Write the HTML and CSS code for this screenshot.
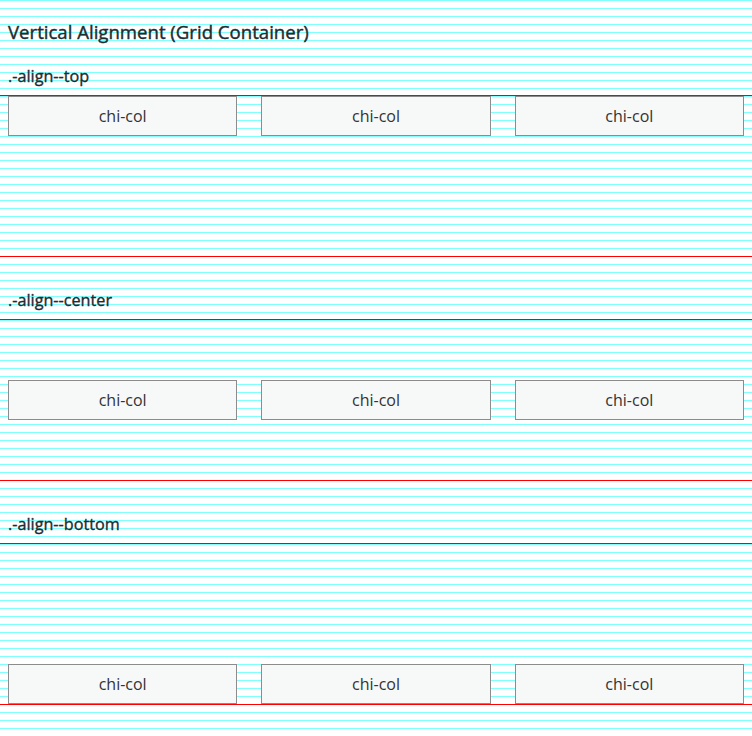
FILE: index.html
```html
<!DOCTYPE html>
<html>
<head>
<meta charset="utf-8">
<link rel="stylesheet" href="styles.css">
</head>
<body>
<h1 class="title">Vertical Alignment (Grid Container)</h1>

<section class="demo">
  <h2 class="demo-label">.-align--top</h2>
  <div class="grid grid--top">
    <div class="col">chi-col</div>
    <div class="col">chi-col</div>
    <div class="col">chi-col</div>
  </div>
</section>

<section class="demo">
  <h2 class="demo-label">.-align--center</h2>
  <div class="grid grid--center">
    <div class="col">chi-col</div>
    <div class="col">chi-col</div>
    <div class="col">chi-col</div>
  </div>
</section>

<section class="demo">
  <h2 class="demo-label">.-align--bottom</h2>
  <div class="grid grid--bottom">
    <div class="col">chi-col</div>
    <div class="col">chi-col</div>
    <div class="col">chi-col</div>
  </div>
</section>
</body>
</html>
```

FILE: styles.css
```css
html {
  background-color: #ffffff;
  background-image: linear-gradient(#80ffff 1px, transparent 1px);
  background-size: 100% 8px;
  background-position: 0 0;
}

body {
  margin: 0;
  font-family: "Open Sans", "Liberation Sans", sans-serif;
  color: #222a2e;
}

.title {
  margin: 0;
  padding: 20px 8px 0;
  font-size: 18.6px;
  line-height: 24px;
  font-weight: 400;
  -webkit-text-stroke: 0.4px #222a2e;
}

.demo {
  margin-top: 20px;
}

.demo + .demo {
  margin-top: 31px;
}

.demo-label {
  margin: 0;
  padding: 0 8px;
  font-size: 16.2px;
  line-height: 24px;
  font-weight: 400;
  -webkit-text-stroke: 0.35px #222a2e;
}

.grid {
  margin-top: 7px;
  height: 160px;
  padding: 0 8px;
  display: grid;
  grid-template-columns: repeat(3, 1fr);
  column-gap: 24px;
  border-top: 1px solid #c41616;
  border-bottom: 1px solid #ff0000;
}

.grid--top { align-items: start; }
.grid--center { align-items: center; }
.grid--bottom { align-items: end; }

.col {
  box-sizing: border-box;
  height: 40px;
  padding: 7px 0;
  background: #f7f8f8;
  border: 1px solid #8c8c8c;
  text-align: center;
  font-size: 16px;
  line-height: 24px;
  color: #333333;
}
```
